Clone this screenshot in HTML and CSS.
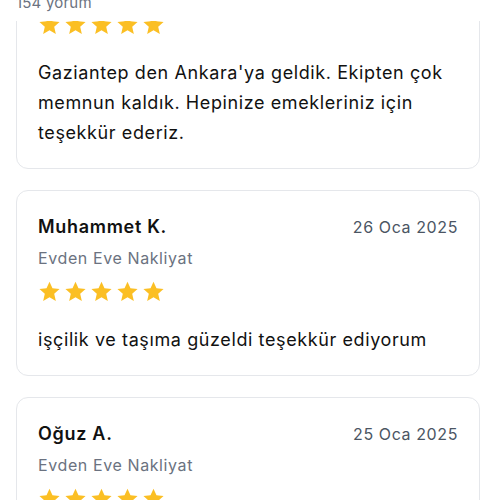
FILE: index.html
```html
<!DOCTYPE html>
<html lang="tr">
<head>
    <meta charset="UTF-8">
    <meta name="viewport" content="width=device-width, initial-scale=1.0">
    <title>Yorumlar</title>
    <link rel="stylesheet" href="styles.css">
</head>
<body>

    <div class="reviews-header">
        <span class="review-count">154 yorum</span>
    </div>

    <div class="review-list">
        <div class="review-card">
            <div class="review-top">
                <span class="reviewer">Hasan D.</span>
                <span class="review-date">27 Oca 2025</span>
            </div>
            <div class="service">Evden Eve Nakliyat</div>
            <div class="stars">
                <svg viewBox="0 0 24 24"><path d="M12 1.8l3.1 6.9 7.4.7-5.6 5 1.7 7.4L12 17.9l-6.6 3.9 1.7-7.4-5.6-5 7.4-.7z"/></svg>
                <svg viewBox="0 0 24 24"><path d="M12 1.8l3.1 6.9 7.4.7-5.6 5 1.7 7.4L12 17.9l-6.6 3.9 1.7-7.4-5.6-5 7.4-.7z"/></svg>
                <svg viewBox="0 0 24 24"><path d="M12 1.8l3.1 6.9 7.4.7-5.6 5 1.7 7.4L12 17.9l-6.6 3.9 1.7-7.4-5.6-5 7.4-.7z"/></svg>
                <svg viewBox="0 0 24 24"><path d="M12 1.8l3.1 6.9 7.4.7-5.6 5 1.7 7.4L12 17.9l-6.6 3.9 1.7-7.4-5.6-5 7.4-.7z"/></svg>
                <svg viewBox="0 0 24 24"><path d="M12 1.8l3.1 6.9 7.4.7-5.6 5 1.7 7.4L12 17.9l-6.6 3.9 1.7-7.4-5.6-5 7.4-.7z"/></svg>
            </div>
            <p class="review-text">Gaziantep den Ankara'ya geldik. Ekipten çok memnun kaldık. Hepinize emekleriniz için teşekkür ederiz.</p>
        </div>

        <div class="review-card">
            <div class="review-top">
                <span class="reviewer">Muhammet K.</span>
                <span class="review-date">26 Oca 2025</span>
            </div>
            <div class="service">Evden Eve Nakliyat</div>
            <div class="stars">
                <svg viewBox="0 0 24 24"><path d="M12 1.8l3.1 6.9 7.4.7-5.6 5 1.7 7.4L12 17.9l-6.6 3.9 1.7-7.4-5.6-5 7.4-.7z"/></svg>
                <svg viewBox="0 0 24 24"><path d="M12 1.8l3.1 6.9 7.4.7-5.6 5 1.7 7.4L12 17.9l-6.6 3.9 1.7-7.4-5.6-5 7.4-.7z"/></svg>
                <svg viewBox="0 0 24 24"><path d="M12 1.8l3.1 6.9 7.4.7-5.6 5 1.7 7.4L12 17.9l-6.6 3.9 1.7-7.4-5.6-5 7.4-.7z"/></svg>
                <svg viewBox="0 0 24 24"><path d="M12 1.8l3.1 6.9 7.4.7-5.6 5 1.7 7.4L12 17.9l-6.6 3.9 1.7-7.4-5.6-5 7.4-.7z"/></svg>
                <svg viewBox="0 0 24 24"><path d="M12 1.8l3.1 6.9 7.4.7-5.6 5 1.7 7.4L12 17.9l-6.6 3.9 1.7-7.4-5.6-5 7.4-.7z"/></svg>
            </div>
            <p class="review-text">işçilik ve taşıma güzeldi teşekkür ediyorum</p>
        </div>

        <div class="review-card">
            <div class="review-top">
                <span class="reviewer">Oğuz A.</span>
                <span class="review-date">25 Oca 2025</span>
            </div>
            <div class="service">Evden Eve Nakliyat</div>
            <div class="stars">
                <svg viewBox="0 0 24 24"><path d="M12 1.8l3.1 6.9 7.4.7-5.6 5 1.7 7.4L12 17.9l-6.6 3.9 1.7-7.4-5.6-5 7.4-.7z"/></svg>
                <svg viewBox="0 0 24 24"><path d="M12 1.8l3.1 6.9 7.4.7-5.6 5 1.7 7.4L12 17.9l-6.6 3.9 1.7-7.4-5.6-5 7.4-.7z"/></svg>
                <svg viewBox="0 0 24 24"><path d="M12 1.8l3.1 6.9 7.4.7-5.6 5 1.7 7.4L12 17.9l-6.6 3.9 1.7-7.4-5.6-5 7.4-.7z"/></svg>
                <svg viewBox="0 0 24 24"><path d="M12 1.8l3.1 6.9 7.4.7-5.6 5 1.7 7.4L12 17.9l-6.6 3.9 1.7-7.4-5.6-5 7.4-.7z"/></svg>
                <svg viewBox="0 0 24 24"><path d="M12 1.8l3.1 6.9 7.4.7-5.6 5 1.7 7.4L12 17.9l-6.6 3.9 1.7-7.4-5.6-5 7.4-.7z"/></svg>
            </div>
            <p class="review-text">Çok ilgili ve özenli bir ekip, herkese tavsiye ederim.</p>
        </div>
    </div>

</body>
</html>
```

FILE: styles.css
```css
body {
    margin: 0;
    font-family: Inter, "Noto Sans", sans-serif;
    letter-spacing: 0.6px;
    background: #fff;
    color: #111;
    height: 500px;
    overflow: hidden;
}

.reviews-header {
    position: relative;
    z-index: 1;
    height: 21px;
    padding: 0 16px;
    background: #fff;
    overflow: hidden;
}

.review-count {
    display: block;
    margin-top: -7px;
    font-size: 15px;
    line-height: 20px;
    letter-spacing: 0.2px;
    color: #6b7280;
}

.review-list {
    display: flex;
    flex-direction: column;
    gap: 21px;
    margin-top: -98px;
    padding: 0 20px 0 16px;
}

.review-card {
    border: 1px solid #e5e7eb;
    border-radius: 12px;
    padding: 22px 21px 20px;
}

.review-top {
    display: flex;
    justify-content: space-between;
    align-items: baseline;
}

.reviewer {
    font-size: 18px;
    line-height: 27px;
    font-weight: 600;
    letter-spacing: 0.7px;
    color: #111;
}

.review-date {
    font-size: 16px;
    color: #4b5563;
}

.service {
    margin-top: 6px;
    font-size: 16px;
    line-height: 24px;
    color: #6b7280;
}

.stars {
    display: flex;
    gap: 3px;
    margin-top: 10px;
}

.stars svg {
    width: 23px;
    height: 23px;
    fill: #fbbf24;
}

.review-text {
    margin: 22px 0 0;
    font-size: 18px;
    line-height: 30px;
    color: #111;
}
```
